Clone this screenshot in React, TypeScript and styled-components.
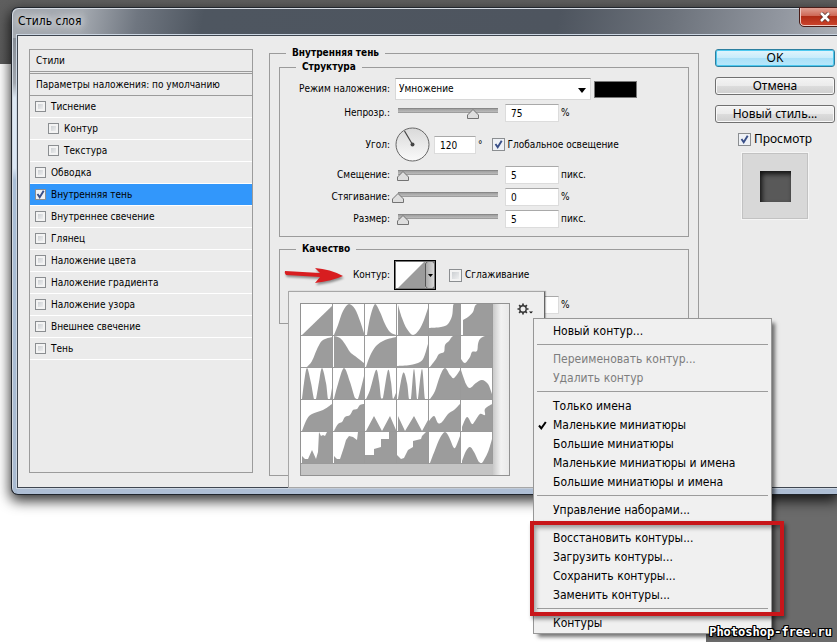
import React from "react";
import styled, { createGlobalStyle, css } from "styled-components";

const SMALL = '"DejaVu Sans Condensed", "DejaVu Sans", sans-serif';
const UI = '"Noto Sans", "Open Sans", sans-serif';

const GlobalStyle = createGlobalStyle`
  *, *::before, *::after { box-sizing: border-box; }
  body { margin: 0; background: #fff; }
  button, input, select { font: inherit; color: inherit; margin: 0; }
`;

/* ---------- contour curves ---------- */

type Point = [number, number];
type Curve = { name: string; sharp?: boolean; points: Point[] };

const curves: Curve[] = [
  { name: "Линейный", sharp: true, points: [[1, 31], [31, 2]] },
  { name: "Конус", points: [[1, 31], [5, 21], [10, 7], [16, 0], [22, 5], [27, 17], [31, 29]] },
  { name: "Конус, асимметричный", points: [[2, 31], [5, 14], [10, 0], [15, 8], [20, 20], [25, 28], [31, 31]] },
  { name: "Конус, инвертированный", points: [[1, 1], [5, 14], [10, 25], [16, 31], [22, 26], [27, 16], [31, 4]] },
  { name: "Выемка, глубокая", points: [[0, 24], [12, 23], [19, 20], [23, 12], [24, 3], [25, 0], [31, 0]] },
  { name: "Выемка, мелкая", points: [[2, 16], [7, 13], [12, 8], [16, 0], [31, 0]] },
  { name: "Гаусс", points: [[6, 31], [11, 25], [17, 11], [22, 4], [31, 1]] },
  { name: "Полукруг", points: [[1, 0], [7, 2], [12, 8], [17, 16], [22, 20], [31, 27]] },
  { name: "Круглый", points: [[1, 31], [5, 20], [11, 10], [20, 4], [31, 1]] },
  { name: "Впадина", points: [[0, 30], [13, 29], [23, 26], [27, 21], [31, 8]] },
  { name: "Ступень", points: [[1, 31], [7, 23], [10, 18], [15, 16], [16, 9], [20, 5], [24, 0], [31, 0]] },
  { name: "Волна", points: [[0, 23], [4, 27], [9, 21], [11, 16], [16, 15], [17, 8], [19, 3], [24, 0], [31, 0]] },
  { name: "Кольцо", points: [[1, 31], [3, 15], [6, 0], [10, 15], [13, 31], [15, 31], [18, 14], [21, 0], [25, 15], [27, 31], [29, 31], [31, 20]] },
  { name: "Кольцо, одинарное", points: [[1, 31], [5, 16], [11, 0], [17, 14], [22, 30], [25, 31], [31, 8]] },
  { name: "Кольцо, двойное", points: [[1, 31], [5, 22], [11, 2], [14, 13], [16, 30], [18, 30], [23, 2], [26, 14], [28, 31], [31, 25]] },
  { name: "Кольцо, тройное", points: [[1, 31], [6, 5], [10, 15], [12, 31], [14, 31], [17, 1], [20, 31], [21, 31], [25, 1], [28, 31], [31, 31]] },
  { name: "Пик", points: [[1, 31], [6, 23], [11, 8], [16, 0], [21, 7], [25, 10], [31, 2]] },
  { name: "Провал", points: [[0, 2], [5, 16], [9, 20], [15, 15], [21, 12], [27, 16], [31, 26]] },
  { name: "Скат", points: [[1, 31], [6, 19], [11, 14], [22, 10], [31, 4]] },
  { name: "Неровный скат", points: [[1, 31], [5, 24], [9, 22], [12, 17], [17, 15], [20, 10], [24, 9], [27, 5], [31, 4]] },
  { name: "Пила", sharp: true, points: [[1, 31], [9, 16], [17, 31], [25, 16], [31, 30]] },
  { name: "Пила, инвертированная", sharp: true, points: [[1, 16], [8, 31], [17, 16], [25, 31], [31, 20]] },
  { name: "Скат с волной", points: [[0, 21], [5, 16], [9, 23], [13, 22], [19, 14], [25, 10], [31, 4]] },
  { name: "Скат со ступенью", points: [[1, 27], [6, 17], [11, 24], [14, 21], [19, 14], [24, 15], [24, 9], [31, 4]] },
  { name: "Двойной провал", sharp: true, points: [[1, 24], [4, 27], [7, 27], [11, 18], [15, 27], [17, 20], [18, 0], [20, 4], [22, 3], [24, 4], [26, 0], [31, 0]] },
  { name: "Уступ", sharp: true, points: [[1, 24], [4, 27], [7, 27], [11, 15], [13, 8], [16, 4], [20, 5], [24, 8], [25, 0], [31, 0]] },
  { name: "Лестница", sharp: true, points: [[0, 23], [9, 23], [9, 17], [16, 15], [16, 7], [24, 7], [24, 0], [31, 0]] },
  { name: "Неровная лестница", sharp: true, points: [[0, 23], [4, 27], [7, 26], [11, 18], [16, 15], [16, 9], [24, 7], [25, 4], [29, 0], [31, 0]] },
  { name: "Гора", points: [[1, 31], [6, 18], [11, 6], [16, 0], [20, 5], [25, 16], [28, 12], [31, 4]] },
  { name: "Холм", points: [[1, 29], [5, 19], [9, 15], [13, 20], [18, 30], [21, 31], [27, 20], [31, 7]] },
];

const clamp = (v: number) => Math.max(0, Math.min(31, v));

function curvePath({ points, sharp }: Curve): string {
  const [first] = points;
  let d = `M${first[0]} 31L${first[0]} ${first[1]}`;
  for (let i = 1; i < points.length; i++) {
    const [x, y] = points[i];
    if (sharp) {
      d += `L${x} ${y}`;
      continue;
    }
    const a = points[i - 1];
    const before = points[i - 2] ?? a;
    const after = points[i + 1] ?? points[i];
    d += `C${a[0] + (x - before[0]) / 6} ${clamp(a[1] + (y - before[1]) / 6)} ${x - (after[0] - a[0]) / 6} ${clamp(y - (after[1] - a[1]) / 6)} ${x} ${y}`;
  }
  return `${d}V31Z`;
}

/* ---------- page and window ---------- */

const Page = styled.main`
  position: relative;
  min-height: 100vh;
  padding: 7px 0 0 11px;
  overflow: hidden;
  color: #000;
  font: 10px/14px ${SMALL};
  background:
    linear-gradient(#5f5f5f, #5b5b5b) 0 0 / 100% 64px no-repeat,
    linear-gradient(#6b6b6b, #6b6b6b) 100% 100% / 131px 160px no-repeat,
    #fff;
`;

const Dialog = styled.section`
  padding: 0 0 6px 5px;
  border: 1px solid #20252c;
  border-right: 0;
  border-radius: 7px 0 0 7px;
  box-shadow: 0 5px 13px 1px rgba(0, 0, 0, 0.8), inset 1px 1px 0 #d4dae2;
  background:
    linear-gradient(#858c95, #a1a7af 45px, #dde8f3 60px, #dbe7f4 130px, #a9bed6 142px, #a9bad0) 0 30px / 5px 100% no-repeat,
    linear-gradient(100deg, #a4a9b0, #a4a9b0 70px, #6f7680 125px, #4e5660 190px, #4e555f 540px, #6c727b 650px, #9297a0 760px, #a9adb4) 0 0 / 100% 30px no-repeat,
    #aebed4;
`;

const TitleBar = styled.header`
  display: flex;
  justify-content: space-between;
  align-items: flex-start;
  height: 27px;
`;

const Title = styled.h1`
  margin: 4px 0 0 1px;
  font: 12px/18px ${SMALL};
  text-shadow: 0 0 8px #fff, 0 0 8px #fff;
`;

const CloseButton = styled.button`
  display: flex;
  justify-content: center;
  align-items: center;
  width: 37px;
  height: 18px;
  padding: 0 0 0 11px;
  border: 1px solid #f0c9c2;
  border-width: 0 0 1px 1px;
  outline: 1px solid #4b1d18;
  border-radius: 0 0 0 4px;
  background: linear-gradient(#e0a093, #cd6553 48%, #b02c16 50%, #c9422b);
`;

const Body = styled.div`
  display: flex;
  padding: 10px 2px 11px 11px;
  border: 1px solid #3f4650;
  border-right: 0;
  outline: 1px solid #ccd6e2;
  background: #ebebeb;
`;

/* ---------- style list ---------- */

const StyleList = styled.nav`
  flex: 0 0 224px;
  margin: 3px 16px 3px 0;
  border: 1px solid #9b9b9b;
`;

const ListHeader = styled.h2`
  height: 22px;
  margin: 0 0 1px;
  padding: 4px 6px;
  border-bottom: 1px solid #9b9b9b;
  font: inherit;
`;

const BlendRow = styled.button`
  display: block;
  width: 100%;
  height: 23px;
  padding: 0 6px;
  border: solid #9b9b9b;
  border-width: 1px 0;
  background: none;
  text-align: left;
`;

const StyleRow = styled.label<{ $nested?: boolean; $active?: boolean }>`
  display: flex;
  align-items: center;
  gap: 5px;
  height: 22px;
  padding-left: ${(p) => (p.$nested ? 18 : 5)}px;
  border-bottom: 1px solid #fff;
  ${(p) => p.$active && css`background: #3297fb;`}
`;

const Check = styled.input.attrs({ type: "checkbox" })<{ $size?: number }>`
  appearance: none;
  flex: none;
  width: ${(p) => p.$size ?? 13}px;
  height: ${(p) => p.$size ?? 13}px;
  border: 1px solid #8b8e91;
  box-shadow: inset 0 0 0 2px #f3f3f3;
  background: linear-gradient(135deg, #c2c6ca, #f8f8f8);
  &:checked {
    background: url("data:image/svg+xml,%3Csvg xmlns='http://www.w3.org/2000/svg' viewBox='0 0 11 11'%3E%3Cpath d='M2.5 5l2.2 3.2L8.7 1.8' fill='none' stroke='%23394f88' stroke-width='1.9'/%3E%3C/svg%3E") center / 11px 11px no-repeat, #eef1f6;
    box-shadow: none;
  }
`;

/* ---------- settings ---------- */

const Group = styled.fieldset<{ $main?: boolean }>`
  flex: ${(p) => (p.$main ? "1 1 0" : "none")};
  min-width: 0;
  min-height: ${(p) => (p.$main ? 430 : 0)}px;
  margin: 0;
  padding: ${(p) => (p.$main ? "0 9px" : "3px 0 6px")};
  border: 1px solid #9b9b9b;
  & + & { margin-top: 5px; padding: 0 0 7px; }
`;

const Legend = styled.legend<{ $main?: boolean }>`
  height: 14px;
  margin-left: ${(p) => (p.$main ? 7 : 16)}px;
  padding: 0 6px;
  font: bold 10px/14px ${SMALL};
`;

const Row = styled.div<{ $height: number }>`
  display: flex;
  align-items: center;
  height: ${(p) => p.$height}px;
`;

const RowLabel = styled.label`
  flex: 0 0 110px;
  margin-right: 5px;
  text-align: right;
`;

const SliderLabel = styled(RowLabel)`
  margin-right: 2px;
`;

const ModeSelect = styled.select`
  appearance: none;
  width: 196px;
  height: 22px;
  padding: 0 18px 0 3px;
  border: 1px solid #d8d8d8;
  border-top-color: #9b9b9b;
  border-radius: 0;
  background: url("data:image/svg+xml,%3Csvg xmlns='http://www.w3.org/2000/svg' viewBox='0 0 8 5'%3E%3Cpath d='M0 0h8L4 5z'/%3E%3C/svg%3E") right 4px top 9px / 8px 5px no-repeat, #fff;
`;

const ColorButton = styled.button`
  width: 43px;
  height: 17px;
  margin-left: 3px;
  padding: 0;
  border: 1px solid #777;
  background: #000;
`;

const Slider = styled.input.attrs({ type: "range" })`
  appearance: none;
  width: 112px;
  height: 18px;
  margin-right: 1px;
  background: none;
  &::-webkit-slider-runnable-track {
    height: 18px;
    background: linear-gradient(#777, #a2a2a2 25%, #b9b9b9 75%, #8b8b8b) 6px 4px / 100px 5px no-repeat;
  }
  &::-webkit-slider-thumb {
    appearance: none;
    width: 12px;
    height: 10px;
    margin-top: 5px;
    background: url("data:image/svg+xml,%3Csvg xmlns='http://www.w3.org/2000/svg' viewBox='0 0 12 10'%3E%3Cpath d='M6 .5L11.5 6v3.5H.5V6z' fill='%23dedede' stroke='%23737373'/%3E%3C/svg%3E");
  }
`;

const Value = styled.input.attrs({ type: "text" })<{ $narrow?: boolean }>`
  width: ${(p) => (p.$narrow ? 42 : 54)}px;
  height: 18px;
  margin-right: 2px;
  padding: 1px 5px 0;
  border: 1px solid #dcdcdc;
  border-top-color: #a9a9a9;
  background: #fff;
`;

const Dial = styled.svg`
  flex: none;
  width: 35px;
  height: 35px;
  margin-right: 4px;
`;

const CheckLabel = styled.label<{ $inset?: number }>`
  display: flex;
  align-items: center;
  gap: 3px;
  margin-left: ${(p) => p.$inset ?? 0}px;
`;

const HiddenRow = styled(Row)`
  padding-left: 225px;
`;

/* ---------- contour picker ---------- */

const Picker = styled.div`
  position: relative;
  flex: none;
  margin-left: -1px;
`;

const PickerButton = styled.button`
  display: flex;
  width: 42px;
  height: 30px;
  padding: 0;
  border: 1px solid #000;
  outline: 1px solid #777;
  outline-offset: -2px;
  background: #fff;
`;

const PickerArrow = styled.span`
  display: flex;
  align-items: center;
  justify-content: center;
  width: 10px;
  height: 28px;
  border: 1px solid #555;
  border-radius: 3px;
  background: linear-gradient(90deg, #aaa, #d8d8d8);
`;

const Arrow = styled.svg`
  position: absolute;
  left: -110px;
  top: 5px;
  width: 60px;
  height: 20px;
  filter: drop-shadow(1px 2px 1px rgba(0, 0, 0, 0.4));
`;

const Popup = styled.div`
  position: absolute;
  z-index: 2;
  left: -106px;
  top: 31px;
  display: flex;
  align-items: flex-start;
  gap: 7px;
  width: 257px;
  height: 197px;
  padding: 11px 0 0 11px;
  border: 1px solid #a7a7a7;
  border-right-color: #666;
  background: #eee;
  box-shadow: 1px 0 1px rgba(0, 0, 0, 0.25);
`;

const Thumbs = styled.div`
  display: flex;
  width: 210px;
  height: 173px;
  border: 1px solid #929292;
  background: #c4c4c4;
`;

const ThumbGrid = styled.div`
  display: grid;
  grid-template-columns: repeat(6, 32px);
  grid-auto-rows: 32px;
  align-content: start;
`;

const Thumb = styled.button`
  padding: 0;
  border: solid #9a9a9a;
  border-width: 0 1px 1px 0;
  background: #fff;
  svg { display: block; width: 31px; height: 31px; }
`;

const ScrollTrack = styled.div`
  flex: 1;
  background: linear-gradient(90deg, #c9c9c9, #f2f2f2 50%, #e9e9e9);
`;

const GearButton = styled.button`
  display: flex;
  padding: 0;
  border: 0;
  background: none;
  svg { display: block; width: 16px; height: 12px; }
`;

/* ---------- menu ---------- */

const Menu = styled.div`
  position: absolute;
  left: 244px;
  top: 26px;
  width: 239px;
  padding: 2px 0 1px;
  border: 1px solid #979797;
  background: #f0f0f0;
  box-shadow: 4px 4px 4px -1px rgba(0, 0, 0, 0.55);
  font: 12px/18px ${SMALL};
`;

const MenuItem = styled.button`
  display: flex;
  align-items: center;
  width: 100%;
  height: 19px;
  padding: 1px 0 0;
  border: 0;
  background: none;
  text-align: left;
  white-space: nowrap;
  &:disabled { color: #7d7d7d; }
`;

const Mark = styled.span`
  display: flex;
  flex: 0 0 19px;
  padding-left: 4px;
`;

const Separator = styled.hr`
  height: 1px;
  margin: 4px 3px;
  border: 0;
  background: #9c9c9c;
`;

const MarkedItems = styled.div`
  position: relative;
  &::after {
    content: "";
    position: absolute;
    inset: -7px -13px -12px -4px;
    border: 4px solid #c8161a;
    box-shadow: 2px 3px 4px rgba(0, 0, 0, 0.45), inset 2px 3px 4px rgba(0, 0, 0, 0.35);
    pointer-events: none;
  }
`;

/* ---------- actions ---------- */

const Actions = styled.div`
  display: flex;
  flex: 0 0 120px;
  flex-direction: column;
  align-items: center;
  gap: 10px;
  margin: 3px 0 0 16px;
  font: 12px/16px ${UI};
`;

const ActionButton = styled.button<{ $primary?: boolean }>`
  width: 100%;
  height: 18px;
  padding: 0;
  border: 1px solid ${(p) => (p.$primary ? "#2d7f9f" : "#707070")};
  border-radius: 3px;
  background: ${(p) =>
    p.$primary ? "linear-gradient(#e2f5fd, #c8ecfb 48%, #a9e0f8 50%, #b8e8fb)" : "linear-gradient(#f3f3f3, #ebebeb 48%, #dcdcdc 50%, #cfcfcf)"};
  box-shadow: inset 0 0 0 1px ${(p) => (p.$primary ? "#4cc9f0" : "#f8f8f8")};
  line-height: 16px;
`;

const PreviewBlock = styled.div`
  display: flex;
  flex-direction: column;
  align-items: center;
  gap: 6px;
  margin-top: -2px;
`;

const Preview = styled.div`
  display: grid;
  place-items: center;
  width: 66px;
  height: 66px;
  border: 1px solid #c2c2c2;
  outline: 1px solid #f5f5f5;
  background: #d8d8d8;
`;

const PreviewSquare = styled.div`
  width: 31px;
  height: 31px;
  background: #595959;
  box-shadow: inset 2px 3px 5px #111;
`;

const Watermark = styled.footer`
  position: absolute;
  z-index: 3;
  right: 5px;
  bottom: 2px;
  color: #fff;
  font: normal bold 12px/16px "DejaVu Sans Mono", monospace;
  text-shadow: 1px 0 #000, -1px 0 #000, 0 1px #000, 0 -1px #000, 1px 1px #000, -1px -1px #000, 1px -1px #000, -1px 1px #000;
`;

/* ---------- data ---------- */

const effects = [
  { name: "Тиснение" },
  { name: "Контур", nested: true },
  { name: "Текстура", nested: true },
  { name: "Обводка" },
  { name: "Внутренняя тень", active: true },
  { name: "Внутреннее свечение" },
  { name: "Глянец" },
  { name: "Наложение цвета" },
  { name: "Наложение градиента" },
  { name: "Наложение узора" },
  { name: "Внешнее свечение" },
  { name: "Тень" },
];

const viewItems = ["Только имена", "Маленькие миниатюры", "Большие миниатюры", "Маленькие миниатюры и имена", "Большие миниатюры и имена"];
const fileItems = ["Восстановить контуры...", "Загрузить контуры...", "Сохранить контуры...", "Заменить контуры..."];

function SliderRow({ id, label, value, unit, height = 22 }: { id: string; label: string; value: number; unit: string; height?: number }) {
  return (
    <Row $height={height}>
      <SliderLabel htmlFor={id}>{label}</SliderLabel>
      <Slider aria-label={label} defaultValue={value} />
      <Value id={id} defaultValue={value} />
      <span>{unit}</span>
    </Row>
  );
}

function Item({ text, checked, disabled }: { text: string; checked?: boolean; disabled?: boolean }) {
  return (
    <MenuItem role="menuitem" disabled={disabled}>
      <Mark>
        {checked && (
          <svg width="9" height="9" viewBox="0 0 9 9">
            <path d="M1 4.5L3.3 7.3L7.8 1" fill="none" stroke="#000" strokeWidth="2" />
          </svg>
        )}
      </Mark>
      {text}
    </MenuItem>
  );
}

function ContourMenu() {
  return (
    <Menu role="menu">
      <Item text="Новый контур..." />
      <Separator />
      <Item text="Переименовать контур..." disabled />
      <Item text="Удалить контур" disabled />
      <Separator />
      {viewItems.map((text, i) => (
        <Item key={text} text={text} checked={i === 1} />
      ))}
      <Separator />
      <Item text="Управление наборами..." />
      <Separator />
      <MarkedItems>
        {fileItems.map((text) => (
          <Item key={text} text={text} />
        ))}
      </MarkedItems>
      <Separator />
      <Item text="Контуры" />
    </Menu>
  );
}

function ContourPopup() {
  return (
    <Popup>
      <Thumbs>
        <ThumbGrid>
          {curves.map((curve) => (
            <Thumb key={curve.name} aria-label={curve.name}>
              <svg viewBox="0 0 31 31">
                <path d={curvePath(curve)} fill="#9c9c9c" />
              </svg>
            </Thumb>
          ))}
        </ThumbGrid>
        <ScrollTrack />
      </Thumbs>
      <GearButton aria-label="Меню контуров">
        <svg viewBox="0 0 16 12">
          <circle cx="6" cy="6" r="3.2" fill="none" stroke="#333" strokeWidth="1.4" />
          <path d="M6 .5v2M6 9.5v2M.5 6h2M9.5 6h2M2.1 2.1l1.4 1.4M8.5 8.5l1.4 1.4M2.1 9.9l1.4-1.4M8.5 3.5l1.4-1.4" stroke="#333" strokeWidth="1.7" />
          <path d="M12 8.5h4l-2 2z" fill="#111" />
        </svg>
      </GearButton>
      <ContourMenu />
    </Popup>
  );
}

export default function App() {
  return (
    <Page>
      <GlobalStyle />
      <Dialog>
        <TitleBar>
          <Title>Стиль слоя</Title>
          <CloseButton aria-label="Закрыть">
            <svg width="12" height="10" viewBox="0 0 12 10">
              <path d="M2 1l8 8M10 1L2 9" stroke="#55302b" strokeWidth="4" />
              <path d="M2 1l8 8M10 1L2 9" stroke="#fff" strokeWidth="2.5" />
            </svg>
          </CloseButton>
        </TitleBar>
        <Body>
          <StyleList>
            <ListHeader>Стили</ListHeader>
            <BlendRow>Параметры наложения: по умолчанию</BlendRow>
            {effects.map((e) => (
              <StyleRow key={e.name} $nested={e.nested} $active={e.active}>
                <Check $size={11} defaultChecked={e.active} />
                {e.name}
              </StyleRow>
            ))}
          </StyleList>

          <Group $main>
            <Legend $main>Внутренняя тень</Legend>
            <Group>
              <Legend>Структура</Legend>
              <Row $height={24}>
                <RowLabel htmlFor="mode">Режим наложения:</RowLabel>
                <ModeSelect id="mode">
                  <option>Умножение</option>
                </ModeSelect>
                <ColorButton aria-label="Цвет тени" />
              </Row>
              <SliderRow id="opacity" label="Непрозр.:" value={75} unit="%" height={24} />
              <Row $height={39}>
                <RowLabel htmlFor="angle">Угол:</RowLabel>
                <Dial viewBox="0 0 35 35">
                  <defs>
                    <linearGradient id="dial" x2="0" y2="1">
                      <stop stopColor="#d9d9d9" />
                      <stop offset="1" stopColor="#fafafa" />
                    </linearGradient>
                  </defs>
                  <circle cx="17.5" cy="17.5" r="16.5" fill="url(#dial)" stroke="#666" />
                  <path d="M17.5 17.5L9.5 4" stroke="#444" strokeWidth="1.2" />
                  <circle cx="17.5" cy="17.5" r="2" fill="#444" />
                </Dial>
                <Value id="angle" $narrow defaultValue="120" />
                <span>°</span>
                <CheckLabel $inset={9}>
                  <Check defaultChecked />
                  Глобальное освещение
                </CheckLabel>
              </Row>
              <SliderRow id="distance" label="Смещение:" value={5} unit="пикс." />
              <SliderRow id="choke" label="Стягивание:" value={0} unit="%" />
              <SliderRow id="size" label="Размер:" value={5} unit="пикс." />
            </Group>
            <Group>
              <Legend>Качество</Legend>
              <Row $height={38}>
                <RowLabel as="span">Контур:</RowLabel>
                <Picker>
                  <Arrow viewBox="0 0 60 20">
                    <path d="M1 6Q0 8 2 10L36 12L31 18Q48 16 59 11Q46 4 31 3L36 8Z" fill="#d81d20" />
                  </Arrow>
                  <PickerButton aria-label="Контур">
                    <svg width="30" height="28" viewBox="0 0 30 28">
                      <path d="M2 28L30 0V28Z" fill="#9c9c9c" />
                    </svg>
                    <PickerArrow>
                      <svg width="5" height="3" viewBox="0 0 5 3">
                        <path d="M0 0h5L2.5 3z" />
                      </svg>
                    </PickerArrow>
                  </PickerButton>
                  <ContourPopup />
                </Picker>
                <CheckLabel $inset={13}>
                  <Check />
                  Сглаживание
                </CheckLabel>
              </Row>
              <HiddenRow $height={22}>
                <Value aria-label="Диапазон" />
                <span>%</span>
              </HiddenRow>
            </Group>
          </Group>

          <Actions>
            <ActionButton $primary>OK</ActionButton>
            <ActionButton>Отмена</ActionButton>
            <ActionButton>Новый стиль...</ActionButton>
            <PreviewBlock>
              <CheckLabel>
                <Check defaultChecked />
                Просмотр
              </CheckLabel>
              <Preview>
                <PreviewSquare />
              </Preview>
            </PreviewBlock>
          </Actions>
        </Body>
      </Dialog>
      <Watermark>Photoshop-free.ru</Watermark>
    </Page>
  );
}
